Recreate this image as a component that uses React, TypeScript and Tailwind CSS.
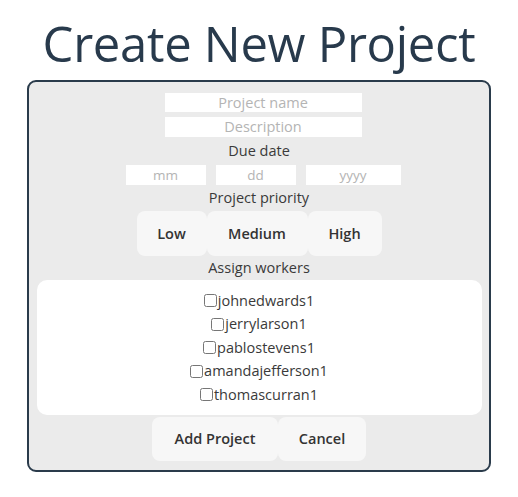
import React from "react";

const workers = [
  "johnedwards1",
  "jerrylarson1",
  "pablostevens1",
  "amandajefferson1",
  "thomascurran1",
];

const font = { fontFamily: "'Open Sans', 'Noto Sans', sans-serif" };

const App = () => {
  return (
    <div className="w-[518px] h-[497px] bg-white flex flex-col items-center" style={font}>
      <h1 className="mt-[8px] h-[70px] text-[49px] leading-[70px] text-[#283a4c] tracking-[-0.3px]">
        Create New Project
      </h1>

      <form className="mt-[2px] w-[464px] h-[392px] border-2 border-[#2a3b4b] rounded-[9px] bg-[#ebebeb] flex flex-col items-center pt-[11px] px-[8px]">
        <input
          className="ml-[8px] w-[197px] h-[19px] bg-white text-center text-[14.5px] placeholder:text-[#b4b4b4] outline-none"
          placeholder="Project name"
        />
        <input
          className="ml-[8px] mt-[5px] w-[197px] h-[20px] bg-white text-center text-[14.5px] placeholder:text-[#b4b4b4] outline-none"
          placeholder="Description"
        />
        <p className="h-[28px] leading-[28px] text-[14.5px] text-[#3a3a3a]">Due date</p>
        <div className="ml-[8px] flex gap-[10px]">
          <input className="w-[80px] h-[20px] bg-white text-center text-[13.5px] placeholder:text-[#b4b4b4] outline-none" placeholder="mm" />
          <input className="w-[80px] h-[20px] bg-white text-center text-[13.5px] placeholder:text-[#b4b4b4] outline-none" placeholder="dd" />
          <input className="w-[95px] h-[20px] bg-white text-center text-[13.5px] placeholder:text-[#b4b4b4] outline-none" placeholder="yyyy" />
        </div>
        <p className="h-[26px] leading-[26px] text-[14.5px] text-[#3a3a3a]">Project priority</p>
        <div className="flex">
          <button type="button" className="w-[70px] h-[45px] rounded-[8px] bg-[#f7f7f7] text-[14.5px] font-semibold text-[#333]">Low</button>
          <button type="button" className="w-[101px] h-[45px] rounded-[8px] bg-[#f7f7f7] text-[14.5px] font-semibold text-[#333]">Medium</button>
          <button type="button" className="w-[74px] h-[45px] rounded-[8px] bg-[#f7f7f7] text-[14.5px] font-semibold text-[#333]">High</button>
        </div>
        <p className="h-[24px] leading-[24px] text-[14.5px] text-[#3a3a3a]">Assign workers</p>
        <div className="w-[445px] h-[135px] bg-white rounded-[10px] flex flex-col items-center pt-[9px]">
          {workers.map((w) => (
            <label key={w} className="h-[23.5px] flex items-center text-[14.5px] text-[#3a3a3a]">
              <input type="checkbox" className="m-0 mr-[1px] w-[13px] h-[13px]" />
              {w}
            </label>
          ))}
        </div>
        <div className="mt-[2px] flex">
          <button type="button" className="w-[126px] h-[44px] rounded-[8px] bg-[#f7f7f7] text-[14.5px] font-semibold text-[#333]">Add Project</button>
          <button type="button" className="w-[88px] h-[44px] rounded-[8px] bg-[#f7f7f7] text-[14.5px] font-semibold text-[#333]">Cancel</button>
        </div>
      </form>
    </div>
  );
};

export default App;
